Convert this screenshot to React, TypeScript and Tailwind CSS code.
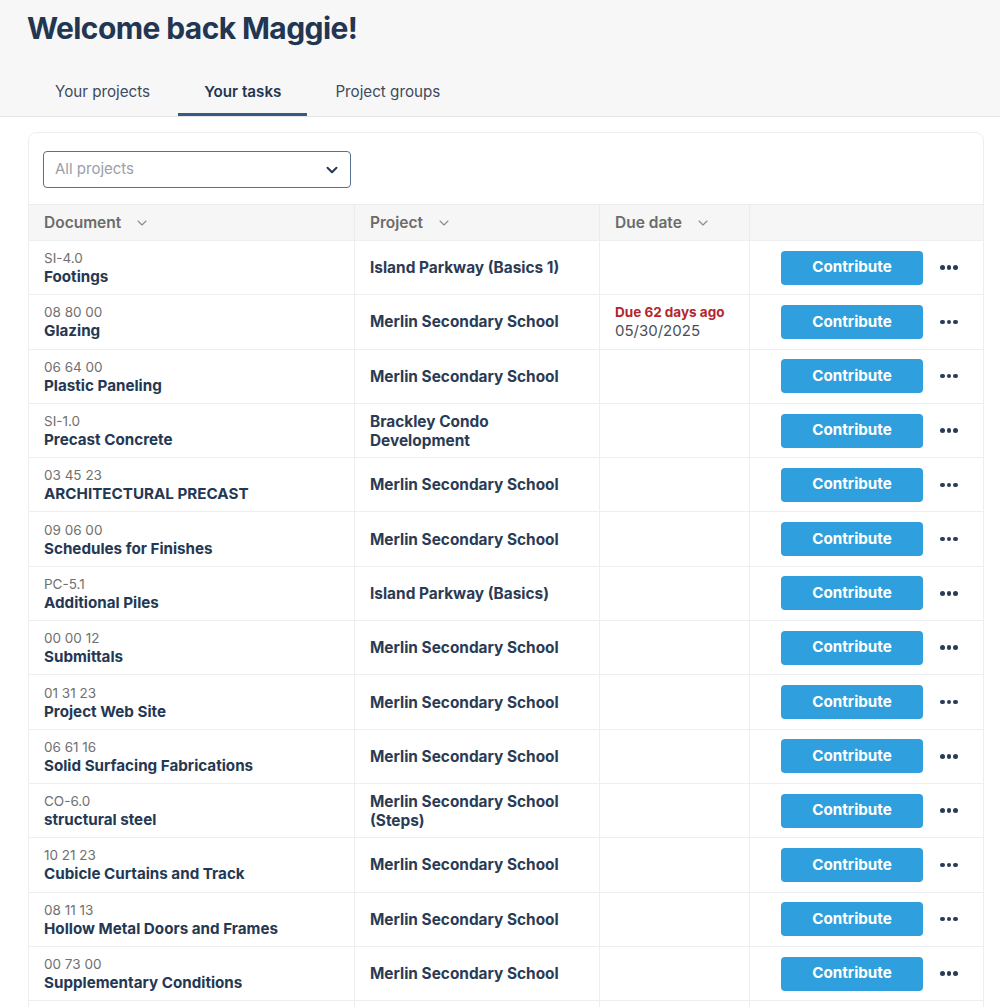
import { ChevronDown } from "lucide-react";

type Task = {
  code: string;
  title: string;
  project: string[];
  overdue?: string;
  date?: string;
};

const tasks: Task[] = [
  { code: "SI-4.0", title: "Footings", project: ["Island Parkway (Basics 1)"] },
  {
    code: "08 80 00",
    title: "Glazing",
    project: ["Merlin Secondary School"],
    overdue: "Due 62 days ago",
    date: "05/30/2025",
  },
  { code: "06 64 00", title: "Plastic Paneling", project: ["Merlin Secondary School"] },
  { code: "SI-1.0", title: "Precast Concrete", project: ["Brackley Condo", "Development"] },
  { code: "03 45 23", title: "ARCHITECTURAL PRECAST", project: ["Merlin Secondary School"] },
  { code: "09 06 00", title: "Schedules for Finishes", project: ["Merlin Secondary School"] },
  { code: "PC-5.1", title: "Additional Piles", project: ["Island Parkway (Basics)"] },
  { code: "00 00 12", title: "Submittals", project: ["Merlin Secondary School"] },
  { code: "01 31 23", title: "Project Web Site", project: ["Merlin Secondary School"] },
  { code: "06 61 16", title: "Solid Surfacing Fabrications", project: ["Merlin Secondary School"] },
  { code: "CO-6.0", title: "structural steel", project: ["Merlin Secondary School", "(Steps)"] },
  { code: "10 21 23", title: "Cubicle Curtains and Track", project: ["Merlin Secondary School"] },
  { code: "08 11 13", title: "Hollow Metal Doors and Frames", project: ["Merlin Secondary School"] },
  { code: "00 73 00", title: "Supplementary Conditions", project: ["Merlin Secondary School"] },
];

const cols = "grid grid-cols-[326px_245px_150px_1fr]";

function HeaderCell({ label, last }: { label?: string; last?: boolean }) {
  return (
    <div
      className={`flex h-[35px] items-center gap-[13px] px-[15px] text-[15.5px] font-semibold text-[#6b6b6b] ${
        last ? "" : "border-r border-[#ececec]"
      }`}
    >
      {label}
      {label && <ChevronDown size={16} strokeWidth={1.6} className="text-[#8a8a8a]" />}
    </div>
  );
}

function Row({ task }: { task: Task }) {
  return (
    <div className={`${cols} h-[54.3px] border-t border-[#eceef1]`}>
      <div className="flex flex-col justify-center border-r border-[#eceef1] px-[15px]">
        <div className="text-[13.5px] leading-[18px] text-[#707070]">{task.code}</div>
        <div className="text-[15.2px] font-bold leading-[19px] text-[#243853]">{task.title}</div>
      </div>
      <div className="flex flex-col justify-center border-r border-[#eceef1] px-[15px] text-[15.4px] font-bold leading-[19px] text-[#2a3b55]">
        {task.project.map((p) => (
          <div key={p}>{p}</div>
        ))}
      </div>
      <div className="flex flex-col justify-center border-r border-[#eceef1] px-[15px]">
        {task.overdue && (
          <div className="text-[13.5px] font-bold leading-[17px] text-[#b3262e]">{task.overdue}</div>
        )}
        {task.date && <div className="text-[15px] leading-[19px] text-[#4a4f57]">{task.date}</div>}
      </div>
      <div className="flex items-center pl-[31px]">
        <button className="h-[34px] w-[142px] rounded-[4px] bg-[#2f9fdd] text-[15.2px] font-bold text-white">
          Contribute
        </button>
        <div className="ml-[17px] flex gap-[2px]">
          <span className="h-[4.5px] w-[4.5px] rounded-full bg-[#2a3b55]" />
          <span className="h-[4.5px] w-[4.5px] rounded-full bg-[#2a3b55]" />
          <span className="h-[4.5px] w-[4.5px] rounded-full bg-[#2a3b55]" />
        </div>
      </div>
    </div>
  );
}

export default function App() {
  return (
    <div className="h-[1007px] overflow-hidden bg-white font-['Inter',sans-serif]">
      <header className="border-b border-[#e4e4e6] bg-[#f7f7f8]">
        <h1 className="pl-[27px] pt-[8px] text-[30px] font-bold leading-[40px] tracking-[-0.02em] text-[#233651]">
          Welcome back Maggie!
        </h1>
        <nav className="mt-[19px] flex gap-[2px] pl-[29px]">
          <div className="flex h-[49px] items-center px-[26px] pt-[1px] text-[15.2px] text-[#3e4a5c]">
            Your projects
          </div>
          <div className="flex h-[49px] items-center border-b-[3px] border-[#365b82] px-[26px] pt-[4px] text-[15.2px] font-semibold text-[#233651]">
            Your tasks
          </div>
          <div className="flex h-[49px] items-center px-[26px] pt-[1px] text-[15.2px] text-[#3e4a5c]">
            Project groups
          </div>
        </nav>
      </header>

      <main className="px-[28px] pt-[15px]">
        <div className="w-[956px] rounded-t-[8px] border border-[#eeeeee]">
          <div className="px-[14px] pb-[16px] pt-[18px]">
            <div className="flex h-[37px] w-[308px] items-center justify-between rounded-[4px] border border-[#56708f] pl-[11px] pr-[9px]">
              <span className="text-[15px] text-[#9aa0a8]">All projects</span>
              <ChevronDown size={18} strokeWidth={2.6} className="text-[#243853]" />
            </div>
          </div>
          <div className={`${cols} border-t border-[#ececec] bg-[#f6f6f6]`}>
            <HeaderCell label="Document" />
            <HeaderCell label="Project" />
            <HeaderCell label="Due date" />
            <HeaderCell last />
          </div>
          {tasks.map((t) => (
            <Row key={t.code} task={t} />
          ))}
          <div className={`${cols} h-[54px] border-t border-[#eceef1]`}>
            <div className="border-r border-[#eceef1]" />
            <div className="border-r border-[#eceef1]" />
            <div className="border-r border-[#eceef1]" />
            <div />
          </div>
        </div>
      </main>
    </div>
  );
}
